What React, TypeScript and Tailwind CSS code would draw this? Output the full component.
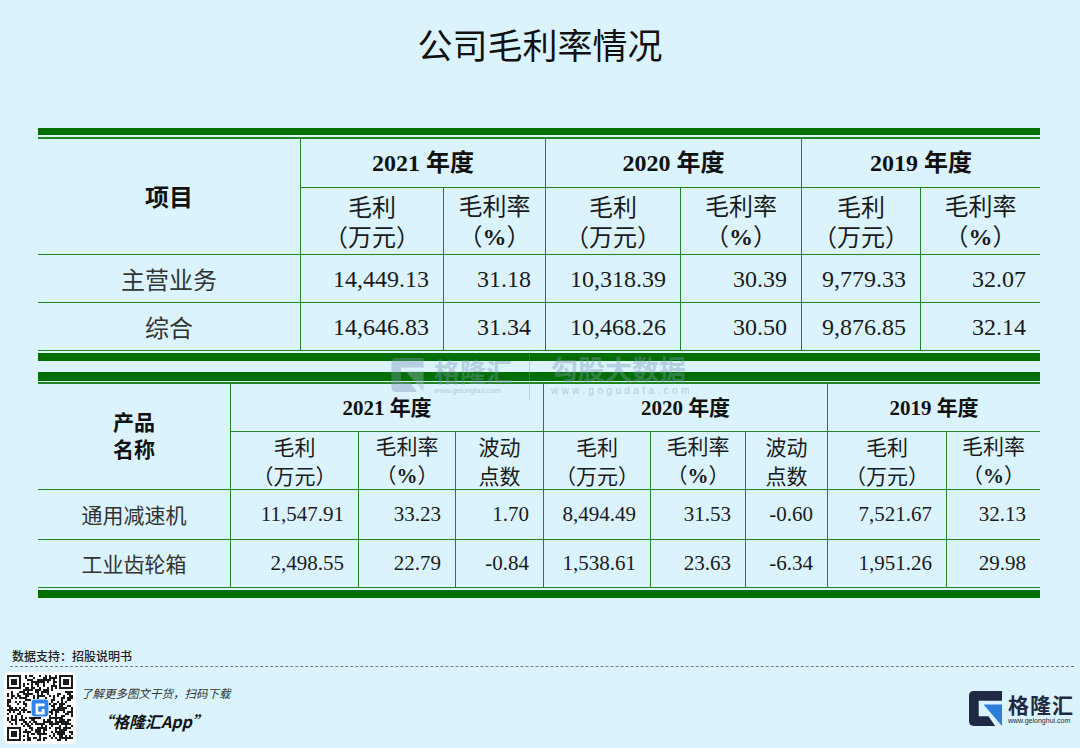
import type { ReactNode } from 'react'

// light cyan page, green ruled tables
function Cell({ children, className = '' }: { children?: ReactNode; className?: string }) {
  return <div className={`flex items-center justify-center bg-[#dbf3fd] ${className}`}>{children}</div>
}

function Num({ children }: { children: ReactNode }) {
  return <div className="flex items-center justify-end bg-[#dbf3fd] pr-[14px] text-[#1a1a1a]">{children}</div>
}

function Year({ y }: { y: string }) {
  return (
    <span className="font-bold text-[#111]">
      {y} <span className="font-['Noto_Sans_CJK_SC',sans-serif]">年度</span>
    </span>
  )
}

function Two({ a, b, lh }: { a: string; b: ReactNode; lh: string }) {
  return (
    <div className={`text-center font-['Noto_Sans_CJK_SC',sans-serif] text-[#1a1a1a] ${lh}`}>
      <div>{a}</div>
      <div>{b}</div>
    </div>
  )
}

const pct = (
  <>
    （<span className="font-['Liberation_Serif',serif] font-bold">%</span>）
  </>
)

function GLogo({ dark, blue, className }: { dark: string; blue: string; className?: string }) {
  return (
    <svg viewBox="0 0 34 36" className={className}>
      <path d="M5 0 H34 V10 H10 V26 H20 L27 36 H5 Q0 36 0 31 V5 Q0 0 5 0 Z" fill={dark} />
      <path d="M15 14 H34 V36 Z" fill={blue} />
    </svg>
  )
}

function QrCode() {
  const n = 33
  let seed = 11
  const rand = () => {
    seed = (seed * 1103515245 + 12345) & 0x7fffffff
    return seed / 0x7fffffff
  }
  const cells: [number, number][] = []
  for (let y = 0; y < n; y++) {
    for (let x = 0; x < n; x++) {
      const finder = (x < 8 && y < 8) || (x > 24 && y < 8) || (x < 8 && y > 24)
      const center = x >= 12 && x <= 20 && y >= 12 && y <= 20
      if (finder || center) continue
      if (rand() < 0.5) cells.push([x, y])
    }
  }
  const finders = [
    [0, 0],
    [26, 0],
    [0, 26],
  ]
  return (
    <div className="flex h-[72px] w-[72px] items-center justify-center rounded-[5px] bg-white">
      <svg viewBox="0 0 33 33" className="h-[66px] w-[66px]" shapeRendering="crispEdges">
        {cells.map(([x, y]) => (
          <rect key={`${x}-${y}`} x={x} y={y} width={1} height={1} fill="#1b1b1b" />
        ))}
        {finders.map(([x, y]) => (
          <g key={`f${x}-${y}`}>
            <rect x={x} y={y} width={7} height={7} fill="#1b1b1b" />
            <rect x={x + 1} y={y + 1} width={5} height={5} fill="#fff" />
            <rect x={x + 2} y={y + 2} width={3} height={3} fill="#1b1b1b" />
          </g>
        ))}
        <rect x={12.3} y={12.3} width={8.4} height={8.4} rx={1.4} fill="#2f86e8" shapeRendering="auto" />
        <path
          d="M14.3 14.3 H18.8 V15.6 H15.6 V18.4 H17.4 V17 H18.8 V19.7 H14.3 Z"
          fill="#fff"
          shapeRendering="auto"
        />
      </svg>
    </div>
  )
}

export default function App() {
  const t1Rows = [
    ['主营业务', '14,449.13', '31.18', '10,318.39', '30.39', '9,779.33', '32.07'],
    ['综合', '14,646.83', '31.34', '10,468.26', '30.50', '9,876.85', '32.14'],
  ]
  const t2Rows = [
    ['通用减速机', '11,547.91', '33.23', '1.70', '8,494.49', '31.53', '-0.60', '7,521.67', '32.13'],
    ['工业齿轮箱', '2,498.55', '22.79', '-0.84', '1,538.61', '23.63', '-6.34', '1,951.26', '29.98'],
  ]

  return (
    <div className="relative h-[748px] w-[1080px] overflow-hidden bg-[#dbf3fd] font-['Liberation_Serif','Noto_Sans_CJK_SC',serif] [text-spacing-trim:space-all]">
      {/* Title */}
      <div className="h-[128px] pt-[24px] text-center font-['Noto_Sans_CJK_SC',sans-serif] text-[35px] leading-[40px] text-[#111]">
        公司毛利率情况
      </div>

      {/* Table 1 */}
      <div className="ml-[38px] w-[1002px] text-[24px]">
        <div className="h-[7px] bg-[#006f00]" />
        <div className="h-[2px]" />
        <div className="grid grid-cols-[262px_142px_101px_134px_120px_118px_119px] grid-rows-[48px_66px_47px_47px] gap-px border-t-2 border-b border-[#238423] bg-[#238423]">
          <Cell className="row-span-2 pb-[2px]">
            <span className="font-['Noto_Sans_CJK_SC',sans-serif] font-bold text-[#111]">项目</span>
          </Cell>
          <Cell className="col-span-2 pb-[2px]">
            <Year y="2021" />
          </Cell>
          <Cell className="col-span-2 pb-[2px]">
            <Year y="2020" />
          </Cell>
          <Cell className="col-span-2 pb-[2px]">
            <Year y="2019" />
          </Cell>
          {[0, 1, 2].map((i) => [
            <Cell key={`a${i}`}>
              <Two a="毛利" b="（万元）" lh="leading-[30px]" />
            </Cell>,
            <Cell key={`b${i}`}>
              <Two a="毛利率" b={pct} lh="leading-[30px]" />
            </Cell>,
          ])}
          {t1Rows.map((r) => [
            <Cell key={r[0]}>
              <span className="font-['Noto_Sans_CJK_SC',sans-serif] text-[#333]">{r[0]}</span>
            </Cell>,
            ...r.slice(1).map((v, i) => <Num key={`${r[0]}${i}`}>{v}</Num>),
          ])}
        </div>
        <div className="h-[2px]" />
        <div className="h-[8px] bg-[#006f00]" />
      </div>

      {/* Table 2 */}
      <div className="ml-[38px] mt-[11px] w-[1002px] text-[21px]">
        <div className="h-[9px] bg-[#006f00]" />
        <div className="h-px" />
        <div className="grid grid-cols-[192px_127px_96px_87px_106px_94px_81px_118px_93px] grid-rows-[47px_57px_49px_47px] gap-px border-t-2 border-b border-[#238423] bg-[#238423]">
          <Cell className="row-span-2 pb-[4px]">
            <div className="text-center font-['Noto_Sans_CJK_SC',sans-serif] font-bold leading-[27px] text-[#111]">
              <div>产品</div>
              <div>名称</div>
            </div>
          </Cell>
          <Cell className="col-span-3">
            <Year y="2021" />
          </Cell>
          <Cell className="col-span-3">
            <Year y="2020" />
          </Cell>
          <Cell className="col-span-2">
            <Year y="2019" />
          </Cell>
          {[0, 1].map((i) => [
            <Cell key={`a${i}`}>
              <Two a="毛利" b="（万元）" lh="leading-[29px]" />
            </Cell>,
            <Cell key={`b${i}`}>
              <Two a="毛利率" b={pct} lh="leading-[29px]" />
            </Cell>,
            <Cell key={`c${i}`}>
              <Two a="波动" b="点数" lh="leading-[29px]" />
            </Cell>,
          ])}
          <Cell>
            <Two a="毛利" b="（万元）" lh="leading-[29px]" />
          </Cell>
          <Cell>
            <Two a="毛利率" b={pct} lh="leading-[29px]" />
          </Cell>
          {t2Rows.map((r) => [
            <Cell key={r[0]}>
              <span className="font-['Noto_Sans_CJK_SC',sans-serif] text-[#333]">{r[0]}</span>
            </Cell>,
            ...r.slice(1).map((v, i) => <Num key={`${r[0]}${i}`}>{v}</Num>),
          ])}
        </div>
        <div className="h-[2px]" />
        <div className="h-[8px] bg-[#006f00]" />
      </div>

      {/* Watermark over the gap between tables */}
      <div className="pointer-events-none absolute left-[388px] top-[350px] flex items-center font-['Noto_Sans_CJK_SC',sans-serif] opacity-40">
        <GLogo dark="#7d9ab5" blue="#9db6cc" className="h-[34px] w-[39px]" />
        <div className="ml-[7px] flex flex-col">
          <span className="text-[26px] font-bold leading-[30px] text-[#7d9ab5]">格隆汇</span>
          <span className="font-['Liberation_Sans',sans-serif] text-[7.5px] leading-[9px] text-[#6f8eab]">www.gelonghui.com</span>
        </div>
        <div className="ml-[17px] h-[50px] w-px bg-[#7d9ab5]" />
        <div className="ml-[21px] flex flex-col">
          <span className="text-[27px] font-bold leading-[32px] text-[#7d9ab5]">勾股大数据</span>
          <span className="font-['Liberation_Sans',sans-serif] text-[10px] leading-[12px] tracking-[3.4px] text-[#6f8eab]">www.gogudata.com</span>
        </div>
      </div>

      {/* Footer */}
      <div className="mt-[50px] pl-[12px] font-['Noto_Sans_CJK_SC',sans-serif] text-[12px] font-medium leading-[16px] text-[#222]">
        数据支持：招股说明书
      </div>
      <div className="ml-[10px] mr-[6px] mt-[2px] border-t border-dashed border-[#7a7a7a]" />
      <div className="mt-[5px] flex items-start justify-between font-['Noto_Sans_CJK_SC',sans-serif]">
        <div className="ml-[4px] flex items-start">
          <QrCode />
          <div className="ml-[5px] flex flex-col">
            <span className="mt-[13px] text-[11.5px] italic leading-[16px] text-[#333]">了解更多图文干货，扫码下载</span>
            <span className="ml-[16px] mt-[10px] text-[16px] font-bold italic leading-[20px] text-[#111]">
              “格隆汇App”
            </span>
          </div>
        </div>
        <div className="mr-[6px] mt-[19px] flex items-center">
          <GLogo dark="#1e2944" blue="#2b7fd9" className="h-[35px] w-[33px]" />
          <div className="ml-[6px] flex flex-col">
            <span className="text-[21px] font-bold leading-[24px] tracking-[1px] text-[#1e2944]">格隆汇</span>
            <span className="font-['Liberation_Sans',sans-serif] text-[7px] leading-[9px] text-[#1e2944]">www.gelonghui.com</span>
          </div>
        </div>
      </div>
    </div>
  )
}
